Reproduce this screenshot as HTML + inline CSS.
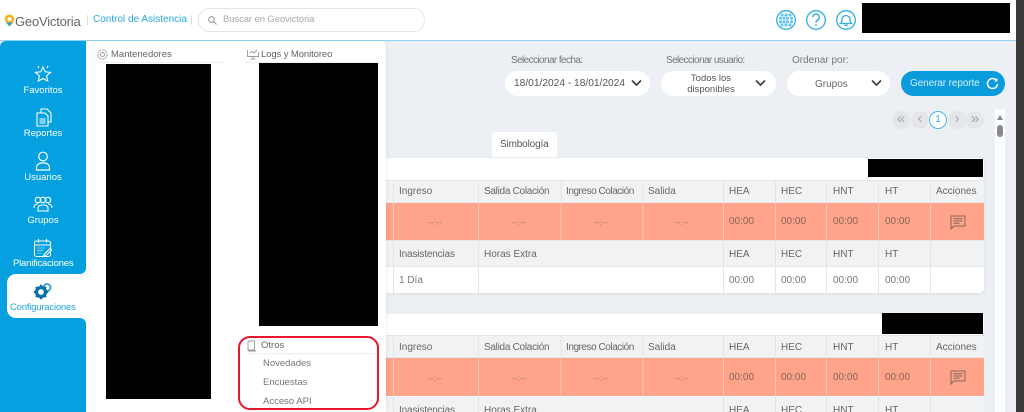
<!DOCTYPE html>
<html><head><meta charset="utf-8"><style>
html,body{margin:0;padding:0;width:1024px;height:412px;overflow:hidden;background:#eceff3;font-family:"Liberation Sans",sans-serif}
body{filter:blur(.3px)}
.a,.t{position:absolute}
.t{white-space:nowrap;font-size:10px;line-height:14px;color:#666;margin-top:1px}
.c{text-align:center}
.k{background:#000}
.w{color:#fff;text-align:center;left:0;width:86px;font-size:9.5px}
.d{font-size:8px;color:#8f7a72;letter-spacing:.2px}
.r{color:#86665c}
.ic{letter-spacing:-.45px}
.sc{letter-spacing:-.28px}
svg{position:absolute;overflow:visible}
.pg{position:absolute;top:111px;width:18px;height:18px;border-radius:50%;background:#e4e6e9;color:#a5a5a5;font-size:15px;line-height:16px;text-align:center}
</style></head><body>
<!-- header -->
<div class="a" style="left:0;top:0;width:1024px;height:40px;background:#fff"></div>
<div class="a" style="left:0;top:40px;width:1016px;height:1px;background:#8fd3f0"></div>
<svg style="left:4px;top:14px" width="11" height="13" viewBox="0 0 11 13"><path d="M5.5.5a4.8 4.8 0 0 0-4.8 4.8c0 3 4.8 7.2 4.8 7.2s4.800-4.200 4.800-7.200A4.800 4.800 0 0 0 5.500.5z" fill="#f6b21b"/><circle cx="5.500" cy="5.300" r="2" fill="#fff"/><path d="M5.500 12.500L2.500 8.500h6z" fill="#21a5e0"/></svg>
<div class="t" style="left:15px;top:12px;font-size:13px;line-height:17px;color:#666;letter-spacing:-.2px">GeoVictoria</div>
<div class="a" style="left:87px;top:15px;width:1px;height:10px;background:#ddd"></div>
<div class="t" style="left:93px;top:12px;font-size:10px;color:#29a9e0">Control de Asistencia</div>
<div class="a" style="left:191px;top:15px;width:1px;height:10px;background:#ddd"></div>
<div class="a" style="left:198px;top:8px;width:225px;height:22px;border:1px solid #e3e5e8;border-radius:13px"></div>
<svg style="left:208px;top:16px" width="9" height="9" viewBox="0 0 9 9" fill="none" stroke="#999" stroke-width="1.100"><circle cx="3.500" cy="3.500" r="2.800"/><path d="M5.500 5.500L8.500 8.500"/></svg>
<div class="t" style="left:223px;top:12px;font-size:9.500px;color:#aaa;letter-spacing:-.1px">Buscar en Geovictoria</div>
<!-- header icons -->
<svg style="left:774.500px;top:8.500px" width="90" height="22" viewBox="0 0 90 22" fill="none" stroke="#2eaee3" stroke-width="1.300">
<circle cx="11" cy="11" r="9.300"/><g fill="#6cc6ec" stroke="none"><circle cx="7" cy="6" r="1.600"/><circle cx="11" cy="6" r="1.600"/><circle cx="15" cy="6" r="1.600"/><circle cx="5.500" cy="9.300" r="1.600"/><circle cx="9" cy="9.300" r="1.600"/><circle cx="12.500" cy="9.300" r="1.600"/><circle cx="16.500" cy="9.300" r="1.600"/><circle cx="5.500" cy="12.800" r="1.600"/><circle cx="9" cy="12.800" r="1.600"/><circle cx="12.500" cy="12.800" r="1.600"/><circle cx="16.500" cy="12.800" r="1.600"/><circle cx="7" cy="16" r="1.600"/><circle cx="11" cy="16" r="1.600"/><circle cx="15" cy="16" r="1.600"/></g>
<circle cx="41" cy="11" r="9.300"/><path d="M37.800 8.300a3.200 3.200 0 1 1 4.800 2.800c-1 .6-1.600 1.200-1.600 2.400" stroke-width="1.400"/><circle cx="41" cy="16" r=".9" fill="#2eaee3" stroke="none"/>
<circle cx="71" cy="11" r="9.300"/><path d="M65.500 14.500c1.200-1 1.500-2 1.500-4a4 4 0 0 1 8 0c0 2 .3 3 1.500 4z"/><path d="M69.500 15.500a1.600 1.600 0 0 0 3 0"/></svg>
<div class="a k" style="left:862px;top:3px;width:148px;height:30px"></div>
<!-- filters -->
<div class="t" style="left:511px;top:53px;color:#777;letter-spacing:-.6px">Seleccionar fecha:</div>
<div class="t" style="left:666px;top:53px;color:#777;letter-spacing:-.6px">Seleccionar usuario:</div>
<div class="t" style="left:792px;top:53px;color:#777">Ordenar por:</div>
<div class="a" style="left:505px;top:71px;width:145px;height:25px;border-radius:13px;background:#fff"></div>
<div class="a" style="left:661px;top:71px;width:115px;height:25px;border-radius:13px;background:#fff"></div>
<div class="a" style="left:787px;top:71px;width:103px;height:25px;border-radius:13px;background:#fff"></div>
<div class="a" style="left:901px;top:71px;width:104px;height:25px;border-radius:13px;background:#0a9bdc"></div>
<div class="t" style="left:514px;top:76px;font-size:10.200px;color:#555">18/01/2024 - 18/01/2024</div>
<div class="t c" style="left:669px;top:72px;width:84px;font-size:9.500px;line-height:11px;color:#555">Todos los<br>disponibles</div>
<div class="t" style="left:815px;top:77px;color:#666">Grupos</div>
<div class="t" style="left:910px;top:76px;color:#d5effa;font-size:10px;letter-spacing:-.1px">Generar reporte</div>
<svg style="left:631px;top:79px" width="260" height="9" viewBox="0 0 260 9" fill="none" stroke="#444" stroke-width="1.800"><path d="M1 1.500l4.500 4.500L10 1.500"/><path d="M125 1.500l4.500 4.500L134 1.500"/><path d="M241 1.500l4.500 4.500L250 1.500"/></svg>
<svg style="left:986px;top:77px" width="13" height="13" viewBox="0 0 13 13" fill="none" stroke="#fff" stroke-width="1.500"><path d="M10.500 3.500A5 5 0 1 0 11.500 7"/><path d="M11.500 1v3.500H8" fill="#fff" stroke="none"/></svg>
<!-- pagination -->
<div class="pg" style="left:892px">«</div><div class="pg" style="left:911px">‹</div>
<div class="pg" style="left:929px;background:#fff;border:1px solid #4db8e8;box-sizing:border-box;color:#2eaee3;font-size:10px;line-height:16px">1</div>
<div class="pg" style="left:948px">›</div><div class="pg" style="left:966px">»</div>
<!-- scrollbar / window edge -->
<div class="a" style="left:995px;top:109px;width:10px;height:303px;background:#fcfdfd"></div>
<div class="a" style="left:997px;top:115px;border:3px solid transparent;border-top:0;border-bottom:5px solid #888"></div>
<div class="a" style="left:997px;top:125px;width:6px;height:12px;border-radius:3px;background:#8a8a8a"></div>
<div class="a" style="left:1016px;top:0;width:8px;height:412px;background:#3a3a3a"></div>
<!-- tab -->
<div class="a" style="left:492px;top:132px;width:65px;height:25px;background:#fff;border-radius:3px 3px 0 0"></div>
<div class="t" style="left:500px;top:137px;color:#555;letter-spacing:-.15px">Simbología</div>
<!-- table 1 -->
<div class="a" style="left:386px;top:158px;width:598px;height:135px;background:#fff;border-radius:0 0 5px 0;box-shadow:0 1px 3px #d8dbdf"></div>
<div class="a k" style="left:868px;top:159px;width:115px;height:18px"></div>
<div class="a" style="left:386px;top:181px;width:598px;height:21px;background:#f1f2f3"></div>
<div class="a" style="left:386px;top:203px;width:598px;height:37px;background:#ffa38a"></div>
<div class="a" style="left:386px;top:241px;width:598px;height:25px;background:#f1f2f3"></div>
<svg style="left:386px;top:158px" width="598" height="135" fill="none" stroke="#e4e5e6"><path d="M7.500 23v112M92.500 23v45M175 23v45M257 23v45M337.500 23v112M389.500 23v112M440.500 23v112M492.500 23v112M544.500 23v112M92.500 83v52"/><path d="M0 22.500h598M0 44.500h598M0 82.500h598M0 108.500h598"/><g stroke="#ffc5b5"><path d="M7.500 45v37M92.500 45v37M175 45v37M257 45v37M337.500 45v37M389.500 45v37M440.500 45v37M492.500 45v37M544.500 45v37"/></g></svg>
<div class="t" style="left:399px;top:184px">Ingreso</div><div class="t sc" style="left:484px;top:184px">Salida Colación</div><div class="t ic" style="left:566px;top:184px">Ingreso Colación</div><div class="t" style="left:648px;top:184px">Salida</div><div class="t" style="left:729px;top:184px">HEA</div><div class="t" style="left:781px;top:184px">HEC</div><div class="t" style="left:833px;top:184px">HNT</div><div class="t" style="left:885px;top:184px">HT</div><div class="t" style="left:936px;top:184px">Acciones</div>
<div class="t d" style="left:428px;top:215px">--:--</div><div class="t d" style="left:512px;top:215px">--:--</div><div class="t d" style="left:594px;top:215px">--:--</div><div class="t d" style="left:675px;top:215px">--:--</div>
<div class="t r" style="left:729px;top:214px">00:00</div><div class="t r" style="left:781px;top:214px">00:00</div><div class="t r" style="left:833px;top:214px">00:00</div><div class="t r" style="left:885px;top:214px">00:00</div>
<svg style="left:950px;top:215px" width="16" height="15" viewBox="0 0 16 15" fill="none" stroke="#86665c" stroke-width="1"><path d="M1 1h14v10H4l-3 3z"/><path d="M3.500 3.800h9M3.500 6h9M3.500 8.200h6"/></svg>
<div class="t" style="left:399px;top:247px;letter-spacing:-.15px">Inasistencias</div><div class="t" style="left:484px;top:247px">Horas Extra</div><div class="t" style="left:729px;top:247px">HEA</div><div class="t" style="left:781px;top:247px">HEC</div><div class="t" style="left:833px;top:247px">HNT</div><div class="t" style="left:885px;top:247px">HT</div>
<div class="t" style="left:399px;top:273px;color:#777">1 Día</div><div class="t" style="left:729px;top:273px;color:#777">00:00</div><div class="t" style="left:781px;top:273px;color:#777">00:00</div><div class="t" style="left:833px;top:273px;color:#777">00:00</div><div class="t" style="left:885px;top:273px;color:#777">00:00</div>
<!-- table 2 -->
<div class="a" style="left:386px;top:314px;width:598px;height:98px;background:#fff"></div>
<div class="a k" style="left:882px;top:313px;width:101px;height:21px"></div>
<div class="a" style="left:386px;top:336px;width:598px;height:22px;background:#f1f2f3"></div>
<div class="a" style="left:386px;top:358px;width:598px;height:38px;background:#ffa38a"></div>
<div class="a" style="left:386px;top:397px;width:598px;height:15px;background:#f1f2f3"></div>
<svg style="left:386px;top:335px" width="598" height="77" fill="none" stroke="#e4e5e6"><path d="M7.500 0v77M92.500 0v23M175 0v23M257 0v23M337.500 0v77M389.500 0v77M440.500 0v77M492.500 0v77M544.500 0v77M92.500 62v15"/><path d="M0 .5h598M0 22.500h598"/><g stroke="#ffc5b5"><path d="M7.500 23v38M92.500 23v38M175 23v38M257 23v38M337.500 23v38M389.500 23v38M440.500 23v38M492.500 23v38M544.500 23v38"/></g></svg>
<div class="t" style="left:399px;top:340px">Ingreso</div><div class="t sc" style="left:484px;top:340px">Salida Colación</div><div class="t ic" style="left:566px;top:340px">Ingreso Colación</div><div class="t" style="left:648px;top:340px">Salida</div><div class="t" style="left:729px;top:340px">HEA</div><div class="t" style="left:781px;top:340px">HEC</div><div class="t" style="left:833px;top:340px">HNT</div><div class="t" style="left:885px;top:340px">HT</div><div class="t" style="left:936px;top:340px">Acciones</div>
<div class="t d" style="left:428px;top:371px">--:--</div><div class="t d" style="left:512px;top:371px">--:--</div><div class="t d" style="left:594px;top:371px">--:--</div><div class="t d" style="left:675px;top:371px">--:--</div>
<div class="t r" style="left:729px;top:370px">00:00</div><div class="t r" style="left:781px;top:370px">00:00</div><div class="t r" style="left:833px;top:370px">00:00</div><div class="t r" style="left:885px;top:370px">00:00</div>
<svg style="left:950px;top:370px" width="16" height="15" viewBox="0 0 16 15" fill="none" stroke="#86665c" stroke-width="1"><path d="M1 1h14v10H4l-3 3z"/><path d="M3.500 3.800h9M3.500 6h9M3.500 8.200h6"/></svg>
<div class="t" style="left:399px;top:403px;letter-spacing:-.15px">Inasistencias</div><div class="t" style="left:484px;top:403px">Horas Extra</div><div class="t" style="left:729px;top:403px">HEA</div><div class="t" style="left:781px;top:403px">HEC</div><div class="t" style="left:833px;top:403px">HNT</div><div class="t" style="left:885px;top:403px">HT</div>
<!-- sidebar -->
<div class="a" style="left:0;top:41px;width:86px;height:371px;background:#04a0e0;border-radius:6px 0 0 0"></div>
<div class="a" style="left:7px;top:274px;width:79px;height:44px;background:#fff;border-radius:9px 0 0 9px"></div>
<div class="a" style="left:80px;top:268px;width:6px;height:6px;background:#fff"></div><div class="a" style="left:80px;top:268px;width:6px;height:6px;background:#04a0e0;border-radius:0 0 6px 0"></div>
<div class="a" style="left:80px;top:318px;width:6px;height:6px;background:#fff"></div><div class="a" style="left:80px;top:318px;width:6px;height:6px;background:#04a0e0;border-radius:0 6px 0 0"></div>
<svg style="left:33px;top:64px" width="20" height="20" viewBox="0 0 20 20" fill="none" stroke="#fff" stroke-width="1.100"><path d="M10 3l2.200 4.800 5.300.6-3.900 3.500 1.100 5.200L10 14.500 5.300 17l1.100-5.200L2.500 8.400l5.300-.6z"/><path d="M5 2l1 2M15 2l-1 2"/></svg>
<svg style="left:35px;top:108px" width="17" height="20" viewBox="0 0 17 20" fill="none" stroke="#fff" stroke-width="1.100"><path d="M2 5h8l3 3v10H2z"/><path d="M6 5V1h6l4 4v9h-3"/><path d="M4.500 11h6M4.500 13h6M4.500 15h6"/></svg>
<svg style="left:34px;top:151px" width="18" height="20" viewBox="0 0 18 20" fill="none" stroke="#fff" stroke-width="1.200"><circle cx="9" cy="5.500" r="4.300"/><path d="M2.500 19v-3a5 5 0 0 1 5-4h3a5 5 0 0 1 5 4v3z"/></svg>
<svg style="left:33px;top:196px" width="20" height="17" viewBox="0 0 20 17" fill="none" stroke="#fff" stroke-width="1.100"><circle cx="5" cy="4" r="2.800"/><circle cx="10" cy="4" r="2.800"/><circle cx="15" cy="4" r="2.800"/><path d="M1 12c0-3 2-4 4-4M19 12c0-3-2-4-4-4"/><path d="M5 15v-3c0-2 2-3 5-3s5 1 5 3v3z"/></svg>
<svg style="left:33px;top:238px" width="20" height="20" viewBox="0 0 20 20" fill="none" stroke="#fff" stroke-width="1.100"><rect x="1.500" y="3" width="16" height="15.500" rx="2"/><path d="M1.500 7h16M5.500 1v3.500M13.500 1v3.500"/><path d="M4.500 10h7M4.500 12.500h6M4.500 15h4" stroke-dasharray="1 1"/><path d="M11 16.500l6-6 1.500 1.500-6 6-2 .5z" fill="#04a0e0"/></svg>
<svg style="left:33px;top:282px" width="20" height="18" viewBox="0 0 20 18"><circle cx="14" cy="5.500" r="3.500" fill="none" stroke="#2a9fd8" stroke-width="1.800"/><circle cx="8" cy="10" r="4.500" fill="#fff" stroke="#0b6fa8" stroke-width="3.200"/><path d="M8 2.800v2M8 15.200v2M.8 10h2M13.200 10h2M3 5l1.400 1.400M11.600 13.600L13 15M3 15l1.400-1.400M11.600 6.400L13 5" stroke="#0b6fa8" stroke-width="2.200"/></svg>
<div class="t w" style="top:83px;width:86px">Favoritos</div>
<div class="t w" style="top:126px">Reportes</div>
<div class="t w" style="top:170px">Usuarios</div>
<div class="t w" style="top:213px">Grupos</div>
<div class="t" style="left:13px;top:256px;color:#fff;font-size:9.500px;letter-spacing:-.2px">Planificaciones</div>
<div class="t" style="left:10px;top:300px;color:#1fa3de;font-size:9.500px;letter-spacing:-.2px">Configuraciones</div>
<!-- menu panel -->
<div class="a" style="left:86px;top:41px;width:300px;height:371px;background:#fff;border-radius:0 5px 0 0;box-shadow:1px 0 3px rgba(0,0,0,.06)"></div>
<svg style="left:97px;top:49px" width="11" height="11" viewBox="0 0 11 11" fill="none" stroke="#999" stroke-width=".9"><circle cx="5.500" cy="5.500" r="2"/><circle cx="5.500" cy="5.500" r="4.600" stroke-dasharray="2 .6"/></svg>
<div class="t" style="left:111px;top:47px;font-size:9.500px;color:#666">Mantenedores</div>
<div class="a" style="left:97px;top:62px;width:128px;height:1px;background:#eee"></div>
<svg style="left:247px;top:49px" width="12" height="11" viewBox="0 0 12 11" fill="none" stroke="#999" stroke-width=".9"><path d="M.5 1v6.500h11V3M3.500 10h5M6 7.500V10M3 4l2-1.500L7 4l3-3"/></svg>
<div class="t" style="left:261px;top:47px;font-size:9.500px;color:#666;letter-spacing:-.1px">Logs y Monitoreo</div>
<div class="a" style="left:246px;top:62px;width:132px;height:1px;background:#eee"></div>
<div class="a k" style="left:106px;top:64px;width:105px;height:335px"></div>
<div class="a k" style="left:259px;top:63px;width:119px;height:263px"></div>
<!-- otros -->
<svg style="left:247px;top:340px" width="10" height="12" viewBox="0 0 10 12" fill="none" stroke="#999" stroke-width=".9"><path d="M1 2.500a1.500 1.500 0 0 1 1.500-1.500h5v9h-5.500A1 1 0 0 1 1 9.500zM1 10a1 1 0 0 0 1 1h7"/></svg>
<div class="t" style="left:261px;top:338px;font-size:9.500px;color:#666">Otros</div>
<div class="a" style="left:246px;top:353px;width:129px;height:1px;background:#eee"></div>
<div class="t" style="left:263px;top:356px;font-size:9.500px;color:#777">Novedades</div>
<div class="t" style="left:263px;top:375px;font-size:9.500px;color:#777">Encuestas</div>
<div class="t" style="left:263px;top:394px;font-size:9.500px;color:#777">Acceso API</div>
<div class="a" style="left:238px;top:336px;width:141px;height:74px;box-sizing:border-box;border:2.500px solid #e8182c;border-radius:12px"></div>
</body></html>
